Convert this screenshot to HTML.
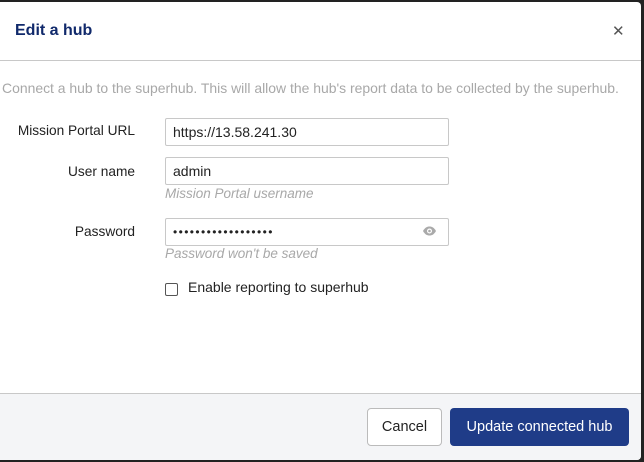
<!DOCTYPE html><html><head><style>
*{box-sizing:border-box;margin:0;padding:0}
body{width:644px;height:462px;background:#222;font-family:"Liberation Sans",sans-serif;position:relative;overflow:hidden}
.d{position:absolute;left:0;top:2px;width:641px;height:458px;background:#fff;border-radius:0 4px 4px 0;overflow:hidden}
.a{position:absolute}
.h{left:15px;top:20px;font-size:16px;font-weight:bold;color:#10296b}
.x{left:612px;top:20px;font-size:15px;color:#555;font-weight:300}
.hr{left:0;top:58px;width:641px;height:1px;background:#c8c8c8}
.desc{left:2px;top:78px;font-size:13.95px;color:#a8a8a8;white-space:nowrap}
.l{right:506px;font-size:13.7px;color:#222;text-align:right}
.i{left:165px;width:284px;height:28px;border:1px solid #c8c8c8;border-radius:2px;font-size:14px;color:#222;padding:5px 7px}
.hp{left:165px;font-size:13.5px;font-style:italic;color:#a8a8a8}
.f{left:0;top:391px;width:641px;height:67px;background:#f4f5f7;border-top:1px solid #c8c8c8}
.b{top:406px;height:38px;border-radius:4px;font-size:14.5px;line-height:38px;text-align:center}
</style></head><body><div class="d">
<div class="a h">Edit a hub</div>
<div class="a x">✕</div>
<div class="a hr"></div>
<div class="a desc">Connect a hub to the superhub. This will allow the hub's report data to be collected by the superhub.</div>
<div class="a l" style="top:121px">Mission Portal URL</div>
<div class="a i" style="top:116px">https://13.58.241.30</div>
<div class="a l" style="top:162px">User name</div>
<div class="a i" style="top:155px">admin</div>
<div class="a hp" style="top:184px">Mission Portal username</div>
<div class="a l" style="top:222px">Password</div>
<div class="a i" style="top:216px;letter-spacing:1.4px;font-size:12px;padding-top:6px">••••••••••••••••••</div>
<svg class="a" style="left:422px;top:223px" width="15" height="12" viewBox="0 0 15 12"><path d="M1 6C3 2.5 5 1.5 7.5 1.5S12 2.5 14 6C12 9.5 10 10.5 7.5 10.5S3 9.5 1 6Z" fill="#aaa"/><circle cx="7.5" cy="6" r="2.5" fill="#fff"/><circle cx="7.5" cy="6" r="1.3" fill="#aaa"/></svg>
<div class="a hp" style="top:244px">Password won't be saved</div>
<div class="a" style="left:165px;top:281px;width:13px;height:13px;border:1px solid #555;border-radius:2px"></div>
<div class="a" style="left:188px;top:277px;font-size:14px;color:#222">Enable reporting to superhub</div>
<div class="a f"></div>
<div class="a b" style="left:367px;width:75px;background:#fff;border:1px solid #bbb;color:#222;line-height:36px">Cancel</div>
<div class="a b" style="left:450px;width:179px;background:#1f3c88;color:#fff">Update connected hub</div>
</div></body></html>
